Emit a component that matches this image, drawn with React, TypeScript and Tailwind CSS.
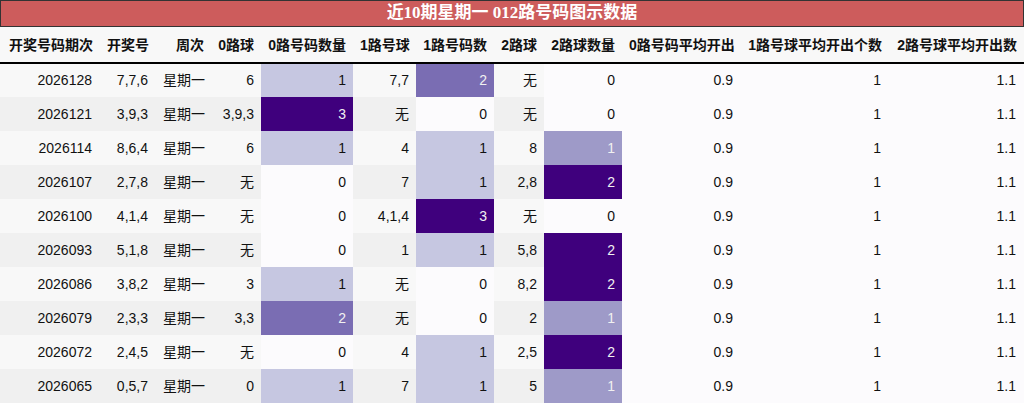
import React from 'react';

type Row = {
  issue: string;
  nums: string;
  week: string;
  r0: string;
  c0: number;
  r1: string;
  c1: number;
  r2: string;
  c2: number;
};

const rows: Row[] = [
  { issue: '2026128', nums: '7,7,6', week: '星期一', r0: '6', c0: 1, r1: '7,7', c1: 2, r2: '无', c2: 0 },
  { issue: '2026121', nums: '3,9,3', week: '星期一', r0: '3,9,3', c0: 3, r1: '无', c1: 0, r2: '无', c2: 0 },
  { issue: '2026114', nums: '8,6,4', week: '星期一', r0: '6', c0: 1, r1: '4', c1: 1, r2: '8', c2: 1 },
  { issue: '2026107', nums: '2,7,8', week: '星期一', r0: '无', c0: 0, r1: '7', c1: 1, r2: '2,8', c2: 2 },
  { issue: '2026100', nums: '4,1,4', week: '星期一', r0: '无', c0: 0, r1: '4,1,4', c1: 3, r2: '无', c2: 0 },
  { issue: '2026093', nums: '5,1,8', week: '星期一', r0: '无', c0: 0, r1: '1', c1: 1, r2: '5,8', c2: 2 },
  { issue: '2026086', nums: '3,8,2', week: '星期一', r0: '3', c0: 1, r1: '无', c1: 0, r2: '8,2', c2: 2 },
  { issue: '2026079', nums: '2,3,3', week: '星期一', r0: '3,3', c0: 2, r1: '无', c1: 0, r2: '2', c2: 1 },
  { issue: '2026072', nums: '2,4,5', week: '星期一', r0: '无', c0: 0, r1: '4', c1: 1, r2: '2,5', c2: 2 },
  { issue: '2026065', nums: '0,5,7', week: '星期一', r0: '0', c0: 1, r1: '7', c1: 1, r2: '5', c2: 1 },
];

const headers = [
  '开奖号码期次',
  '开奖号',
  '周次',
  '0路球',
  '0路号码数量',
  '1路号球',
  '1路号码数',
  '2路球',
  '2路球数量',
  '0路号码平均开出',
  '1路号球平均开出个数',
  '2路号球平均开出数',
];

const widths = [100, 56, 55, 50, 92, 63, 78, 50, 78, 119, 148, 135];

// Purples gradient, max 3 (0路/1路 counts)
const scale3: Record<number, string> = {
  0: 'bg-[#fcfbfd] text-[#111]',
  1: 'bg-[#c6c7e1] text-[#111]',
  2: 'bg-[#7a6db3] text-[#f1f1f1]',
  3: 'bg-[#3f007d] text-[#f1f1f1]',
};

// Purples gradient, max 2 (2路 counts)
const scale2: Record<number, string> = {
  0: 'bg-[#fcfbfd] text-[#111]',
  1: 'bg-[#9e9ac8] text-[#f1f1f1]',
  2: 'bg-[#3f007d] text-[#f1f1f1]',
};

export default function App() {
  return (
    <div
      className="w-[1024px] bg-white text-[14px] text-[#111]"
      style={{ fontFamily: '"Liberation Sans", "Noto Sans CJK SC", sans-serif' }}
    >
      {/* Title */}
      <div
        className="h-[27px] border border-[#333] bg-[#cd5c5c] text-center text-[17px] font-bold leading-[24px] text-white"
        style={{ fontFamily: '"Liberation Serif", "Noto Sans CJK SC", serif' }}
      >
        近10期星期一 012路号码图示数据
      </div>

      <table className="w-[1024px] table-fixed border-collapse whitespace-nowrap">
        <colgroup>
          {widths.map((w, i) => (
            <col key={i} style={{ width: w }} />
          ))}
        </colgroup>
        <thead>
          <tr className="h-[36px] border-b-2 border-black bg-[#f8f8f8]">
            {headers.map((h) => (
              <th key={h} className="px-[7px] pt-[1px] text-right font-bold">
                {h}
              </th>
            ))}
          </tr>
        </thead>
        <tbody>
          {rows.map((r, i) => {
            const stripe = i % 2 === 0 ? 'bg-[#f8f8f8]' : 'bg-[#f0f0f0]';
            return (
              <tr key={r.issue} className="h-[34px]">
                <td className={`${stripe} px-[8px] text-right`}>{r.issue}</td>
                <td className={`${stripe} px-[8px] text-right`}>{r.nums}</td>
                <td className={`${stripe} px-[6px] text-right`}>{r.week}</td>
                <td className={`${stripe} px-[7px] text-right`}>{r.r0}</td>
                <td className={`${scale3[r.c0]} px-[7px] text-right`}>{r.c0}</td>
                <td className={`${stripe} px-[7px] text-right`}>{r.r1}</td>
                <td className={`${scale3[r.c1]} px-[7px] text-right`}>{r.c1}</td>
                <td className={`${stripe} px-[7px] text-right`}>{r.r2}</td>
                <td className={`${scale2[r.c2]} px-[7px] text-right`}>{r.c2}</td>
                <td className="bg-[#fcfbfd] px-[8px] text-right">0.9</td>
                <td className="bg-[#fcfbfd] px-[8px] text-right">1</td>
                <td className="bg-[#fcfbfd] px-[8px] text-right">1.1</td>
              </tr>
            );
          })}
        </tbody>
      </table>
    </div>
  );
}
